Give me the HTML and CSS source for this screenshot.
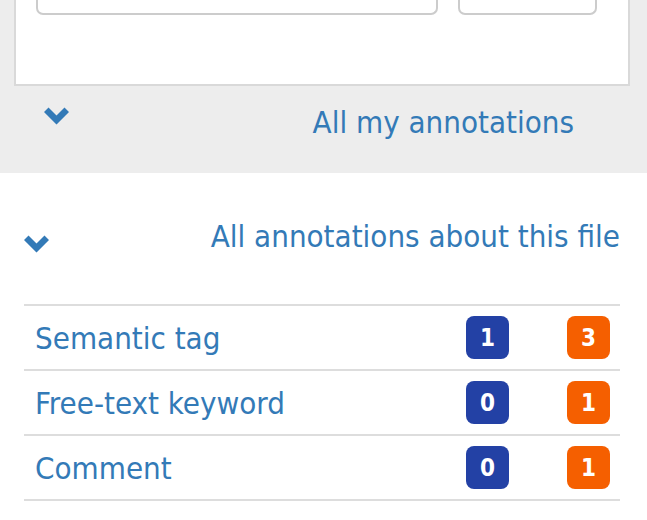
FILE: index.html
```html
<!DOCTYPE html>
<html>
<head>
<meta charset="utf-8">
<link rel="stylesheet" href="styles.css">
</head>
<body>
<section class="mine">
  <div class="panel">
    <div class="inputs">
      <div class="field field-wide"></div>
      <div class="field field-narrow"></div>
    </div>
  </div>
  <div class="head head-mine">
    <svg class="chev" width="25" height="18" viewBox="0 0 25 18"><polygon points="0,5 4.5,0.5 12.5,8.5 20.5,0.5 25,5 12.5,17.5" fill="#337ab7"/></svg>
    <span class="title">All my annotations</span>
  </div>
</section>
<section class="file">
  <div class="head head-file">
    <svg class="chev" width="25" height="18" viewBox="0 0 25 18"><polygon points="0,5 4.5,0.5 12.5,8.5 20.5,0.5 25,5 12.5,17.5" fill="#337ab7"/></svg>
    <span class="title">All annotations about this file</span>
  </div>
  <ul class="list">
    <li class="row"><span class="label">Semantic tag</span><span class="badges"><span class="badge blue">1</span><span class="badge orange">3</span></span></li>
    <li class="row"><span class="label">Free-text keyword</span><span class="badges"><span class="badge blue">0</span><span class="badge orange">1</span></span></li>
    <li class="row"><span class="label">Comment</span><span class="badges"><span class="badge blue">0</span><span class="badge orange">1</span></span></li>
  </ul>
</section>
</body>
</html>
```
FILE: styles.css
```css
html, body {
  margin: 0;
  padding: 0;
  background: #ffffff;
  font-family: "DejaVu Sans Condensed", "DejaVu Sans", sans-serif;
  color: #337ab7;
}
.mine {
  display: flow-root;
  background: #ededed;
  height: 173px;
  box-sizing: border-box;
  padding: 0 17px 0 14px;
}
.panel {
  margin-top: -10px;
  height: 96px;
  box-sizing: border-box;
  background: #ffffff;
  border: 2px solid #d9d9d9;
  padding: 0 31px 0 20px;
}
.inputs {
  display: flex;
  gap: 20px;
}
.field {
  height: 23px;
  box-sizing: border-box;
  border: 2px solid #cccccc;
  border-top: none;
  border-radius: 0 0 7px 7px;
}
.field-wide { width: 402px; }
.field-narrow { flex: 1; }
.head {
  display: flex;
  justify-content: space-between;
  align-items: flex-start;
}
.head-mine {
  padding: 18px 56px 0 30px;
}
.head-mine .chev { margin-top: 3px; }
.head-file {
  padding: 45px 0 0 0;
}
.head-file .chev { margin-top: 17px; }
.file {
  padding: 0 27px 0 24px;
}
.title {
  font-size: 31px;
  line-height: 36px;
}
.list {
  list-style: none;
  margin: 50px 0 0 0;
  padding: 0;
  border-bottom: 2px solid #dddddd;
}
.row {
  display: flex;
  justify-content: space-between;
  align-items: center;
  height: 65px;
  box-sizing: border-box;
  border-top: 2px solid #dddddd;
  padding: 0 10px 0 11px;
}
.label {
  font-size: 31px;
  line-height: 36px;
}
.badges {
  display: flex;
  gap: 58px;
}
.badge {
  width: 43px;
  height: 43px;
  border-radius: 8px;
  color: #ffffff;
  font-size: 24px;
  font-weight: bold;
  display: flex;
  align-items: center;
  justify-content: center;
}
.blue { background: #2341a5; }
.orange { background: #f55f00; }
```
